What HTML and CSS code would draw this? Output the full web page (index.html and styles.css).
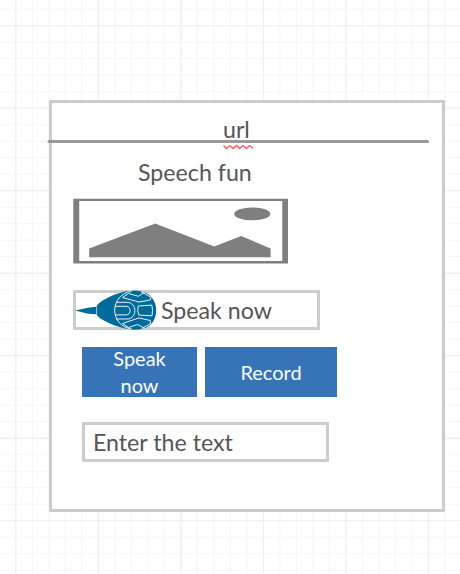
FILE: index.html
```html
<!DOCTYPE html>
<html lang="en">
<head>
<meta charset="utf-8">
<title>Speech fun</title>
<link rel="stylesheet" href="styles.css">
</head>
<body>
<main class="card">
  <header class="url"><span>url</span>
    <svg class="squiggle" width="32" height="6" viewBox="0 0 32 6"><path d="M.5 1.5 3.5 4.5 7 1.5 10.2 4.5 13.5 1.5 16.8 4.5 20 1.5 23.3 4.5 26.6 1.5 30.2 4.5"/></svg>
  </header>
  <svg class="rule" width="383" height="4" viewBox="0 0 383 4"><path d="M2 1.5H380.5"/></svg>
  <h1 class="title">Speech fun</h1>
  <svg class="picture" width="216" height="66" viewBox="73 198 216 66">
    <path fill-rule="evenodd" d="M73.3 198.8H288V263.4H73.3ZM79.2 201V261H282.3V201Z"/>
    <ellipse cx="252.3" cy="213.9" rx="18" ry="6.4"/>
    <path d="M89.2 248.5 155.2 223.4 214.3 246.6 241.2 235.9 270.6 248.5V257.2H89.2Z"/>
  </svg>
  <div class="field voice">
    <svg class="mic" width="84" height="40" viewBox="74 290.5 84 40">
      <path class="body" d="M75 311 88 308.2 96 307.2V314.8L88 314.2Z"/>
      <path class="body" d="M96.6 306.5Q98.5 303.5 103 300.8C110 296.5 117 294 124 292.2C134 290.4 145 290.7 151 297C155 301.5 156.3 306 156.2 311C156 318 153.5 323 149 326.5C142 331 132 330.8 124 328.8C117 327 110 324.5 103 320.6Q98.5 318 96.6 315.2Z"/>
      <path class="lines" d="M131.5 291.8C121 293 114.6 302 114.7 311C114.8 320 121 328 131.8 329.6M116 302.8H127C137.5 302.8 137.5 319.5 127 319.5H116M115 306.8H126C131.5 306.8 131.5 315.4 126 315.4H115M138.3 306.5 151.8 305.6Q153.2 311 152 316.3L139 315.6 137.7 311ZM122.5 298 128.5 294 138.5 296.8 144.5 292.8M122.5 298 139 302.5 150.2 300.5 151 297.8 141 292M122.5 324 128.5 328 137.5 325 144.5 328.7M122.5 324 139 318.4 150.2 321 150.5 324 142 329"/>
    </svg>
    <span>Speak now</span>
  </div>
  <div class="buttons">
    <button class="speak"><span>Speak<br>now</span></button>
    <button class="record">Record</button>
  </div>
  <div class="field entry"><span>Enter the text</span></div>
</main>
</body>
</html>
```
FILE: styles.css
```css
* { box-sizing: border-box; }
body {
  margin: 0;
  height: 574px;
  overflow: hidden;
  padding: 100px 0 0 49px;
  font: 23.2px/30px Lato, sans-serif;
  color: #555;
  background-color: #fff;
  background-image:
    linear-gradient(90deg, #eee 1px, transparent 1px),
    linear-gradient(#eee 1px, transparent 1px),
    linear-gradient(90deg, #f5f5f5 1px, transparent 1px),
    linear-gradient(#f5f5f5 1px, transparent 1px);
  background-size: 82.5px 82.5px, 82.5px 82.5px, 16.5px 16.5px, 16.5px 16.5px;
  background-position: 15.4px 25.2px;
}
.card {
  display: flex;
  flex-direction: column;
  align-items: flex-start;
  width: 396px;
  height: 412px;
  border: 3px solid #ccc;
  border-radius: 1px;
  background: #fff;
}
.url {
  width: 100%;
  height: 37px;
  padding: 11px 0 0 171px;
  position: relative;
}
.squiggle { position: absolute; left: 171px; top: 41px; }
.squiggle path { fill: none; stroke: #ff5b5b; stroke-width: 1.3; }
.rule { flex: none; margin-left: -5px; position: relative; }
.rule path { stroke: #999; stroke-width: 3; stroke-linecap: round; }
.title {
  margin: 13px 0 0 86px;
  font: inherit;
  white-space: nowrap;
}
.picture { flex: none; margin: 11px 0 0 21px; fill: #7f7f7f; }
.field {
  flex: none;
  display: flex;
  align-items: center;
  width: 247px;
  height: 40px;
  border: 3px solid #ccc;
  border-radius: 1px;
  white-space: nowrap;
}
.voice { margin: 26px 0 0 21px; }
.mic { flex: none; margin-left: -2px; overflow: visible; }
.voice span { margin-left: 3px; padding-bottom: 1px; }
.body { fill: #006b9b; }
.lines { fill: none; stroke: #e8f4f8; stroke-width: 1; stroke-linejoin: round; }
.buttons { display: flex; gap: 8px; margin: 17px 0 0 30px; }
button {
  height: 50px;
  padding: 0;
  border: 0;
  background: #3673b7;
  color: #fff;
  font: 20px/27px Lato, sans-serif;
  display: flex;
  align-items: center;
  justify-content: center;
}
.speak { width: 115px; align-items: flex-start; }
.speak span { margin-top: -2px; }
.record { width: 132px; }
.entry { margin: 25px 0 0 30px; padding-left: 8px; }
```
